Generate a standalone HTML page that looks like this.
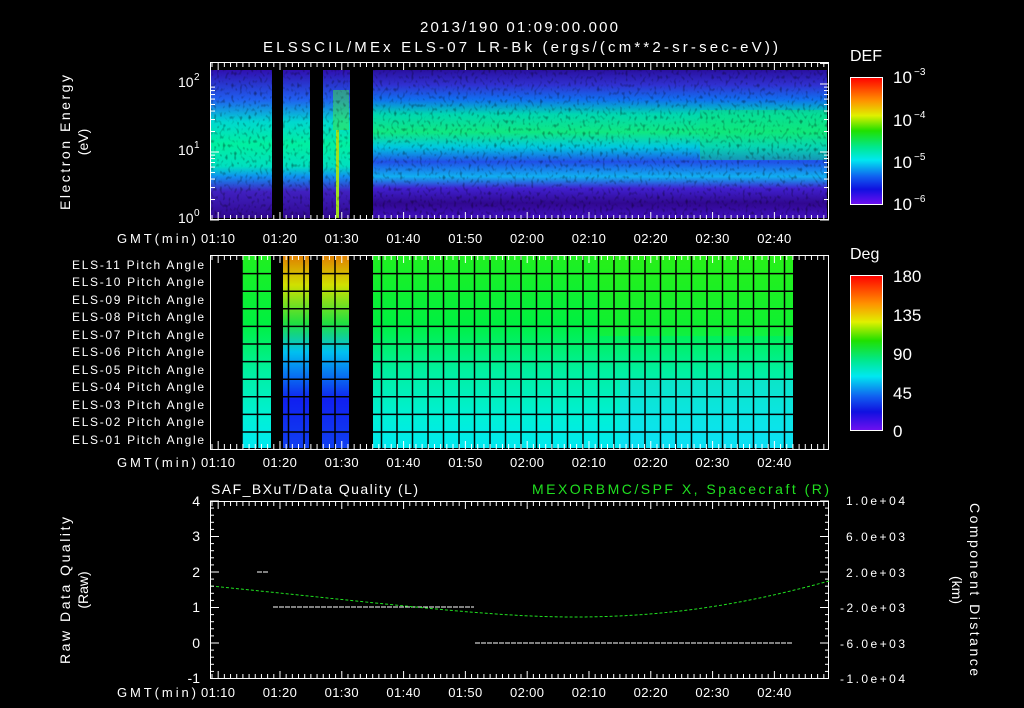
<!DOCTYPE html>
<html><head><meta charset="utf-8">
<style>
html,body{margin:0;padding:0;background:#000;}
svg{display:block;}
text{font-family:"Liberation Sans",sans-serif;fill:#fff;}
</style></head>
<body>
<svg id="s" width="1024" height="708" viewBox="0 0 1024 708" xmlns="http://www.w3.org/2000/svg">
<defs>
<linearGradient id="spec" x1="0" y1="0" x2="0" y2="1">
<stop offset="0" stop-color="#2a10a0"/>
<stop offset="0.1" stop-color="#3030d0"/>
<stop offset="0.2" stop-color="#1070f0"/>
<stop offset="0.3" stop-color="#00d8b0"/>
<stop offset="0.42" stop-color="#10e880"/>
<stop offset="0.52" stop-color="#00c8e0"/>
<stop offset="0.62" stop-color="#2050e8"/>
<stop offset="0.72" stop-color="#10b0f0"/>
<stop offset="0.8" stop-color="#4020d0"/>
<stop offset="0.9" stop-color="#300890"/>
<stop offset="1" stop-color="#4010c0"/>
</linearGradient>
<linearGradient id="spec2" x1="0" y1="0" x2="0" y2="1">
<stop offset="0" stop-color="#3010b0"/>
<stop offset="0.2" stop-color="#2060f0"/>
<stop offset="0.35" stop-color="#00d8d0"/>
<stop offset="0.5" stop-color="#00f0a0"/>
<stop offset="0.65" stop-color="#00e0c0"/>
<stop offset="0.72" stop-color="#1090f0"/>
<stop offset="0.82" stop-color="#4020c0"/>
<stop offset="1" stop-color="#300890"/>
</linearGradient>
<linearGradient id="pa" x1="0" y1="0" x2="0" y2="1">
<stop offset="0" stop-color="#20f020"/>
<stop offset="0.35" stop-color="#00f040"/>
<stop offset="0.6" stop-color="#00f0a0"/>
<stop offset="0.85" stop-color="#00f0d8"/>
<stop offset="1" stop-color="#00e8f0"/>
</linearGradient>
<linearGradient id="paB" x1="0" y1="0" x2="0" y2="1">
<stop offset="0" stop-color="#e08000"/>
<stop offset="0.15" stop-color="#d0e000"/>
<stop offset="0.35" stop-color="#20e040"/>
<stop offset="0.5" stop-color="#00c0f0"/>
<stop offset="0.75" stop-color="#1020f0"/>
<stop offset="1" stop-color="#1040f0"/>
</linearGradient>
<linearGradient id="cb" x1="0" y1="0" x2="0" y2="1">
<stop offset="0" stop-color="#ff0000"/>
<stop offset="0.18" stop-color="#ff9000"/>
<stop offset="0.3" stop-color="#e0f000"/>
<stop offset="0.42" stop-color="#20e000"/>
<stop offset="0.55" stop-color="#00e890"/>
<stop offset="0.65" stop-color="#00e8f0"/>
<stop offset="0.78" stop-color="#1060f0"/>
<stop offset="0.88" stop-color="#1010e0"/>
<stop offset="1" stop-color="#7010f0"/>
</linearGradient>
<filter id="noise"><feTurbulence type="fractalNoise" baseFrequency="0.35 0.25" numOctaves="1" seed="3"/><feColorMatrix type="matrix" values="0 0 0 0 0  0 0 0 0 0  0 0 0 0 0  0 0 0 -2.6 1.2"/><feComposite in2="SourceGraphic" operator="in"/></filter>
</defs>

<text x="420" y="32" font-size="15" textLength="198" lengthAdjust="spacing">2013/190 01:09:00.000</text>
<text x="263" y="52" font-size="15" textLength="515" lengthAdjust="spacing">ELSSCIL/MEx ELS-07 LR-Bk  (ergs/(cm**2-sr-sec-eV))</text>

<!-- top spectrogram -->
<rect x="211" y="70" width="61" height="148" fill="url(#spec2)"/>
<rect x="283" y="70" width="27" height="148" fill="url(#spec2)"/>
<rect x="323" y="70" width="27" height="148" fill="url(#spec2)"/>
<rect x="333" y="90" width="16" height="40" fill="#40e840" opacity="0.5"/>
<rect x="336" y="130" width="3" height="88" fill="#a0e020"/>
<rect x="373" y="70" width="454" height="148" fill="url(#spec)"/>
<rect x="700" y="110" width="127" height="50" fill="#10e870" opacity="0.4"/>
<rect x="211" y="70" width="616" height="148" fill="#000" filter="url(#noise)" opacity="0.5"/>
<rect x="210.5" y="62.5" width="618" height="157" fill="none" stroke="#fff" stroke-width="1"/>
<text transform="translate(70,210) rotate(-90)" font-size="14" textLength="135" lengthAdjust="spacing">Electron Energy</text>
<text transform="translate(88,142) rotate(-90)" font-size="14" text-anchor="middle">(eV)</text>
<text x="178" y="87" font-size="14">10</text><text x="194" y="80" font-size="10">2</text>
<text x="178" y="155" font-size="14">10</text><text x="194" y="148" font-size="10">1</text>
<text x="178" y="223" font-size="14">10</text><text x="194" y="216" font-size="10">0</text>
<g id="ax1" font-size="13"></g>

<!-- DEF colorbar -->
<text x="850" y="61" font-size="16">DEF</text>
<rect x="850.5" y="77.5" width="32" height="127" fill="url(#cb)" stroke="#fff"/>
<text x="893" y="83" font-size="17">10</text><text x="914" y="75" font-size="10">−3</text>
<text x="893" y="126" font-size="17">10</text><text x="914" y="118" font-size="10">−4</text>
<text x="893" y="168" font-size="17">10</text><text x="914" y="160" font-size="10">−5</text>
<text x="893" y="210" font-size="17">10</text><text x="914" y="202" font-size="10">−6</text>

<!-- pitch angle panel -->
<rect x="242" y="256" width="551" height="192" fill="url(#pa)"/>
<rect x="620" y="380" width="173" height="68" fill="#20d0ff" opacity="0.35"/>
<rect x="600" y="256" width="193" height="80" fill="#40f000" opacity="0.25"/>
<rect x="283" y="256" width="26" height="192" fill="url(#paB)"/>
<rect x="322" y="256" width="27" height="192" fill="url(#paB)"/>
<rect x="271" y="256" width="12" height="192" fill="#000"/>
<rect x="309" y="256" width="13" height="192" fill="#000"/>
<rect x="349" y="256" width="24" height="192" fill="#000"/>
<g id="grid" stroke="#000" stroke-width="1.5"></g>
<rect x="210.5" y="255.5" width="618" height="194" fill="none" stroke="#fff"/>
<g font-size="12">
<text x="72" y="269" textLength="132" lengthAdjust="spacing">ELS-11 Pitch Angle</text>
<text x="72" y="286" textLength="132" lengthAdjust="spacing">ELS-10 Pitch Angle</text>
<text x="72" y="304" textLength="132" lengthAdjust="spacing">ELS-09 Pitch Angle</text>
<text x="72" y="321" textLength="132" lengthAdjust="spacing">ELS-08 Pitch Angle</text>
<text x="72" y="339" textLength="132" lengthAdjust="spacing">ELS-07 Pitch Angle</text>
<text x="72" y="356" textLength="132" lengthAdjust="spacing">ELS-06 Pitch Angle</text>
<text x="72" y="374" textLength="132" lengthAdjust="spacing">ELS-05 Pitch Angle</text>
<text x="72" y="391" textLength="132" lengthAdjust="spacing">ELS-04 Pitch Angle</text>
<text x="72" y="409" textLength="132" lengthAdjust="spacing">ELS-03 Pitch Angle</text>
<text x="72" y="426" textLength="132" lengthAdjust="spacing">ELS-02 Pitch Angle</text>
<text x="72" y="444" textLength="132" lengthAdjust="spacing">ELS-01 Pitch Angle</text>
</g>
<g id="ax2" font-size="13"></g>
<text x="850" y="259" font-size="16">Deg</text>
<rect x="850.5" y="275.5" width="32" height="155" fill="url(#cb)" stroke="#fff"/>
<g font-size="17">
<text x="893" y="282">180</text><text x="893" y="321">135</text><text x="893" y="360">90</text><text x="893" y="399">45</text><text x="893" y="437">0</text>
</g>

<!-- bottom panel -->
<text x="211" y="494" font-size="14" textLength="207" lengthAdjust="spacing">SAF_BXuT/Data Quality (L)</text>
<text x="532" y="494" font-size="14" textLength="297" lengthAdjust="spacing" style="fill:#20e020">MEXORBMC/SPF X, Spacecraft (R)</text>
<rect x="210.5" y="501.5" width="618" height="177" fill="none" stroke="#fff"/>
<g font-size="14" text-anchor="end">
<text x="200" y="506">4</text><text x="200" y="541">3</text><text x="200" y="577">2</text><text x="200" y="612">1</text><text x="200" y="648">0</text><text x="200" y="683">-1</text>
</g>
<g font-size="12">
<text x="846" y="505" textLength="59" lengthAdjust="spacing">1.0e+04</text><text x="846" y="541" textLength="59" lengthAdjust="spacing">6.0e+03</text><text x="846" y="577" textLength="59" lengthAdjust="spacing">2.0e+03</text><text x="840" y="612" textLength="65" lengthAdjust="spacing">-2.0e+03</text><text x="840" y="648" textLength="65" lengthAdjust="spacing">-6.0e+03</text><text x="840" y="683" textLength="65" lengthAdjust="spacing">-1.0e+04</text>
</g>
<text transform="translate(70,664) rotate(-90)" font-size="14" textLength="147" lengthAdjust="spacing">Raw Data Quality</text>
<text transform="translate(88,590) rotate(-90)" font-size="14" text-anchor="middle">(Raw)</text>
<text transform="translate(970,503) rotate(90)" font-size="14" textLength="173" lengthAdjust="spacing">Component Distance</text>
<text transform="translate(952,590) rotate(90)" font-size="14" text-anchor="middle">(km)</text>
<g stroke="#fff" stroke-dasharray="5 1">
<line x1="273" y1="607" x2="474" y2="607"/>
<line x1="475" y1="643" x2="793" y2="643"/>
<line x1="257" y1="572" x2="269" y2="572"/>
</g>
<path d="M211 586 C 400 605, 490 617, 575 617 C 680 617, 760 600, 829 581" fill="none" stroke="#20e020" stroke-dasharray="3 2"/>
<g id="ax3" font-size="13"></g>
</svg>
<script>
var NS="http://www.w3.org/2000/svg";
function el(p,t,a,txt){var e=document.createElementNS(NS,t);for(var k in a)e.setAttribute(k,a[k]);if(txt)e.textContent=txt;document.getElementById(p).appendChild(e);}
var labs=["01:10","01:20","01:30","01:40","01:50","02:00","02:10","02:20","02:30","02:40"];
function axis(id,top,bot,ly){
 el(id,"text",{x:117,y:ly,textLength:79,lengthAdjust:"spacing"},"GMT(min)");
 for(var i=0;i<10;i++){el(id,"text",{x:201+i*61.8,y:ly,textLength:34,lengthAdjust:"spacing"},labs[i]);}
 for(var x=212;x<828;x+=6.18){var big=Math.abs(((x-218)/61.8)-Math.round((x-218)/61.8))<0.05;var L=big?8:5;
  el(id,"line",{x1:x,y1:top,x2:x,y2:top+L,stroke:"#fff"});el(id,"line",{x1:x,y1:bot,x2:x,y2:bot-L,stroke:"#fff"});}
}
axis("ax1",62,220,243);axis("ax2",255,449,467);axis("ax3",501,679,697);
[0,1].forEach(function(d){for(var m=1;m<=9;m++){var y=220-(d+Math.log10(m))*68;el("ax1","line",{x1:829,y1:y,x2:m==1?820:824,y2:y,stroke:"#fff"});el("ax1","line",{x1:210,y1:y,x2:m==1?219:215,y2:y,stroke:"#fff"});}});
for(var m=1;m<=2;m++){var y=220-(2+Math.log10(m))*68;if(y>62)el("ax1","line",{x1:829,y1:y,x2:820,y2:y,stroke:"#fff"});}
for(var x=242;x<794;x+=15.5){el("grid","line",{x1:x,y1:256,x2:x,y2:449});}
for(var i=1;i<11;i++){var y=256+i*17.6;el("grid","line",{x1:242,y1:y,x2:793,y2:y});}
for(var y=501;y<=679;y+=7.1){var big=Math.abs(((y-501)/35.5)-Math.round((y-501)/35.5))<0.05;el("ax3","line",{x1:210,y1:y,x2:big?219:214,y2:y,stroke:"#fff"});el("ax3","line",{x1:829,y1:y,x2:big?820:825,y2:y,stroke:"#fff"});}
</script>
</body></html>
